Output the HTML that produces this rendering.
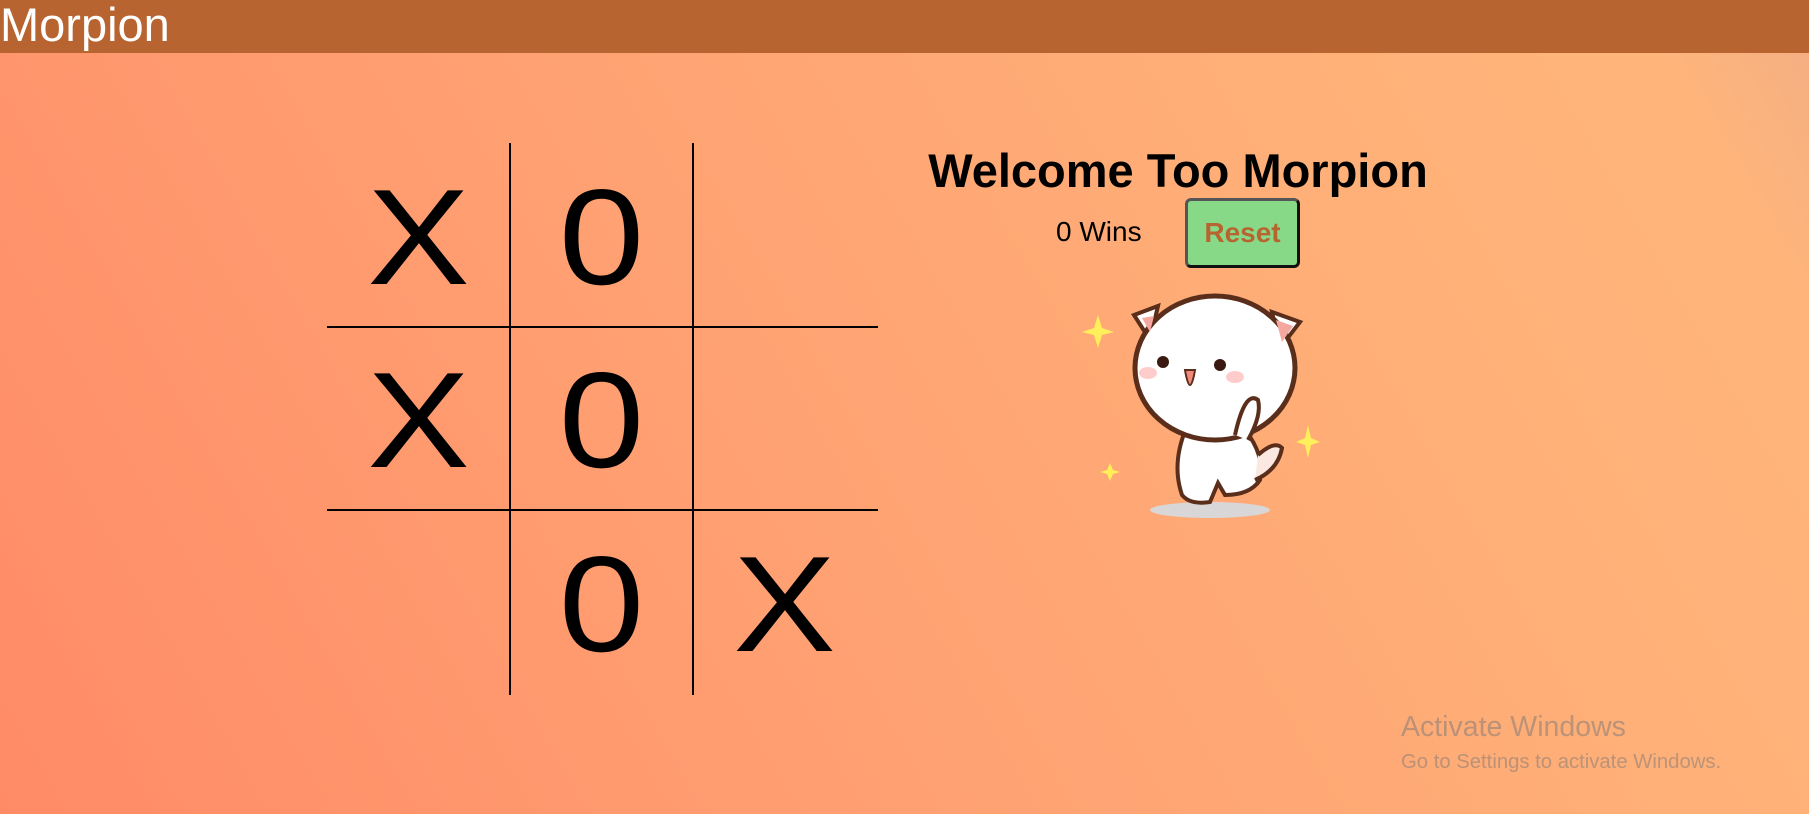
<!DOCTYPE html>
<html><head><meta charset="utf-8"><style>
html,body{margin:0;padding:0;width:1809px;height:814px;overflow:hidden;font-family:"Liberation Sans",Arial,sans-serif}
body{background:linear-gradient(60deg,#ff8b66 0%,#ffa072 40%,#ffb078 75%,#ffb57a 92%,#f2ad84 100%);position:relative}
.hdr{position:absolute;left:0;top:0;width:1809px;height:53px;background:#b86430;color:#fff;font-size:47px;line-height:50px}
.hdr span{position:absolute;left:0;top:0}
.v{position:absolute;width:2px;background:#000;top:143px;height:552px}
.h{position:absolute;height:2px;background:#000;left:327px;width:551px}
.c{position:absolute;width:183px;height:183px;font-size:136px;line-height:189px;text-align:center;color:#000;transform:scaleX(1.13)}
.title{position:absolute;left:880px;width:596px;top:143px;text-align:center;font-weight:bold;font-size:47px}
.wins{position:absolute;left:1056px;top:216px;font-size:28px}
.btn{position:absolute;left:1185px;top:198px;box-sizing:border-box;width:115px;height:70px;background:#88d987;border:3px solid #555;border-right-color:#111;border-bottom-color:#111;border-radius:6px;color:#b86430;font-weight:bold;font-size:28px;text-align:center;line-height:63px}
.aw{position:absolute;left:1401px;top:711px;color:rgba(120,120,120,0.5);font-size:28.5px}
.aw2{position:absolute;left:1401px;top:751px;color:rgba(120,120,120,0.5);font-size:20.3px}
</style></head><body>
<div class="hdr"><span>Morpion</span></div>
<div class="v" style="left:509px"></div>
<div class="v" style="left:692px"></div>
<div class="h" style="top:326px"></div>
<div class="h" style="top:509px"></div>
<div class="c" style="left:327px;top:143px">X</div>
<div class="c" style="left:510px;top:143px">0</div>
<div class="c" style="left:327px;top:326px">X</div>
<div class="c" style="left:510px;top:326px">0</div>
<div class="c" style="left:510px;top:510px">0</div>
<div class="c" style="left:693px;top:510px">X</div>
<div class="title">Welcome Too Morpion</div>
<div class="wins">0 Wins</div>
<div class="btn">Reset</div>
<svg style="position:absolute;left:1050px;top:280px" width="300" height="250" viewBox="0 0 300 250">
<ellipse cx="160" cy="230" rx="60" ry="8" fill="#d9d6d8"/>
<g fill="#ffef5a">
<path d="M48 35 L52 48 L64 52 L52 55 L48 68 L44 55 L32 52 L44 48Z"/>
<path d="M258 145 L261 158 L270 162 L261 165 L258 178 L255 165 L246 162 L255 158Z"/>
<path d="M60 183 L63 190 L70 192 L63 194 L60 201 L57 194 L50 192 L57 190Z"/>
</g>
<path d="M195 150 Q215 175 210 200 Q200 215 175 215 L168 203 L160 222 Q140 225 132 215 Q120 180 140 140 Z" fill="#fff" stroke="#5a2e1a" stroke-width="4"/>
<path d="M208 175 Q225 160 232 168 Q228 190 205 200" fill="#fbe8e0" stroke="#5a2e1a" stroke-width="4"/>
<path d="M84 35 L108 26 L100 60 Z M250 42 L222 32 L230 68Z" fill="#fff" stroke="#5a2e1a" stroke-width="4"/>
<ellipse cx="165" cy="88" rx="80" ry="72" fill="#fff" stroke="#5a2e1a" stroke-width="5"/>
<path d="M92 38 L100 52 L104 36Z M243 46 L226 40 L232 62Z" fill="#f5a8a0"/>
<circle cx="113" cy="82" r="6" fill="#3a1a10"/><circle cx="170" cy="85" r="6" fill="#3a1a10"/>
<ellipse cx="98" cy="93" rx="9" ry="6" fill="#fcc"/><ellipse cx="185" cy="97" rx="9" ry="6" fill="#fcc"/>
<path d="M135 90 Q140 120 145 90 Z" fill="#f08a7a" stroke="#5a2e1a" stroke-width="2"/>
<path d="M185 155 Q195 110 208 120 Q212 135 198 160" fill="#fff" stroke="#5a2e1a" stroke-width="4"/>
</svg>
<div class="aw">Activate Windows</div>
<div class="aw2">Go to Settings to activate Windows.</div>
</body></html>
